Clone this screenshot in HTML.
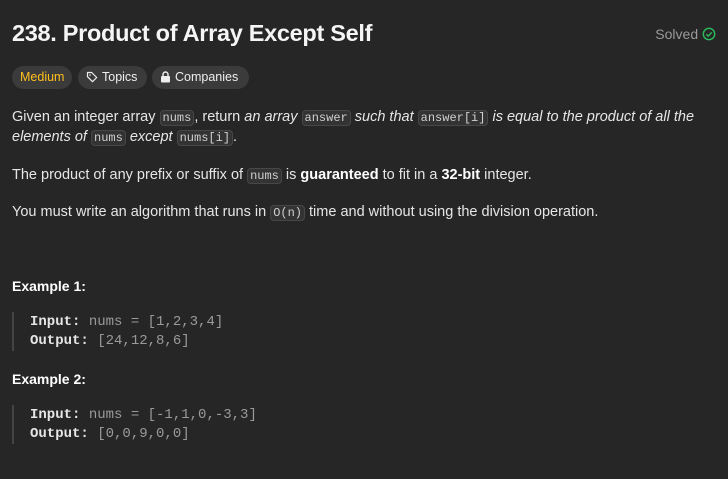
<!DOCTYPE html>
<html><head><meta charset="utf-8"><style>
body{margin:0;width:728px;height:479px;background:#262626;color:#eff1f6bf;font-family:"Liberation Sans",sans-serif;position:relative;overflow:hidden}
.a{position:absolute;white-space:nowrap}
.t{left:12px;top:20px;font-size:23.5px;font-weight:bold;color:#f5f5f5;letter-spacing:-0.3px}
.pill{position:absolute;top:66px;height:23px;border-radius:12px;background:#3b3b3b;font-size:12.5px;line-height:23px;color:#eee;box-sizing:border-box;padding:0 8px}
.p{left:12px;font-size:14.5px;color:#e6e6e6;line-height:20px}
code{font-family:"Liberation Mono",monospace;font-size:12px;background:#333;border:1px solid #474747;border-radius:4px;padding:0 2px;color:#d0d0d0}
b{color:#fff}
.ex{left:12px;font-size:14px;font-weight:bold;color:#fff}
.pre{left:12px;border-left:2px solid #444;padding-left:16px;font-family:"Liberation Mono",monospace;font-size:14px;line-height:19px;color:#9a9a9a}
.pre b{color:#e6e6e6}
</style></head><body>
<div class="a t">238. Product of Array Except Self</div>
<div class="a" style="right:12px;top:26px;font-size:14px;color:#9a9a9a">Solved <svg width="14" height="14" viewBox="0 0 14 14" style="vertical-align:-2px"><circle cx="7" cy="7" r="5.7" fill="none" stroke="#2cbb5d" stroke-width="1.4"/><path d="M4.3 7.2l1.9 1.9 3.6-3.8" fill="none" stroke="#2cbb5d" stroke-width="1.4"/></svg></div>
<div class="pill" style="left:12px;width:60px;color:#ffc01e">Medium</div>
<div class="pill" style="left:78px;width:69px"><svg width="12" height="12" viewBox="0 0 12 12" style="vertical-align:-2px;margin-right:4px"><path d="M1.5 1.5h4.2l5 5-4.2 4.2-5-5z" fill="none" stroke="#eee" stroke-width="1.2" stroke-linejoin="round"/><circle cx="4" cy="4" r="0.8" fill="#eee"/></svg>Topics</div>
<div class="pill" style="left:152px;width:97px"><svg width="11" height="12" viewBox="0 0 11 12" style="vertical-align:-2px;margin-right:4px"><rect x="1" y="5" width="9" height="6.5" rx="1" fill="#eee"/><path d="M3 5V3.5a2.5 2.5 0 0 1 5 0V5" fill="none" stroke="#eee" stroke-width="1.4"/></svg>Companies</div>
<div class="a p" style="top:107px">Given an integer array <code>nums</code>, return <i>an array</i> <code>answer</code> <i>such that</i> <code>answer[i]</code> <i>is equal to the product of all the</i></div>
<div class="a p" style="top:127px"><i>elements of</i> <code>nums</code> <i>except</i> <code>nums[i]</code>.</div>
<div class="a p" style="top:165px">The product of any prefix or suffix of <code>nums</code> is <b>guaranteed</b> to fit in a <b>32-bit</b> integer.</div>
<div class="a p" style="top:202px">You must write an algorithm that runs in <code>O(n)</code> time and without using the division operation.</div>
<div class="a ex" style="top:278px">Example 1:</div>
<div class="a pre" style="top:312px;padding-top:1px;padding-bottom:0">
<b>Input:</b> nums = [1,2,3,4]<br><b>Output:</b> [24,12,8,6]</div>
<div class="a ex" style="top:371px">Example 2:</div>
<div class="a pre" style="top:405px;padding-top:1px"><b>Input:</b> nums = [-1,1,0,-3,3]<br><b>Output:</b> [0,0,9,0,0]</div>
</body></html>
